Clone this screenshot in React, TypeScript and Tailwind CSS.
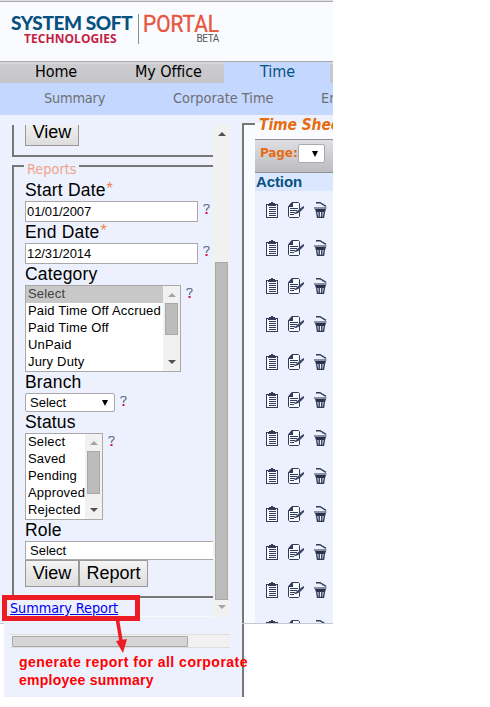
import React from 'react';

const tahoma = 'font-["DejaVu_Sans_Condensed","DejaVu_Sans",sans-serif] [font-stretch:condensed]';
const verdana = 'font-["DejaVu_Sans",sans-serif]';

function Hint() {
  return (
    <svg width="7" height="10" viewBox="0 0 7 10" className="shrink-0">
      <path d="M1 2.6V1.6L2 .6H5L6 1.6V3L3.6 5.2V7" fill="none" stroke="#6d7796" strokeWidth="1.3" />
      <rect x="2.5" y="8" width="2" height="2" fill="#d0103a" />
    </svg>
  );
}

function Arrow({ up = false, color = '#505050' }: { up?: boolean; color?: string }) {
  return (
    <svg width="8" height="4" viewBox="0 0 8 4" className="block shrink-0">
      <path d={up ? 'M0 4L4 0L8 4Z' : 'M0 0L4 4L8 0Z'} fill={color} />
    </svg>
  );
}

function Caret() {
  return (
    <svg width="6" height="6" viewBox="0 0 6 6" className="block shrink-0">
      <path d="M0 0H6L3 6Z" fill="#000" />
    </svg>
  );
}

function Label({ children, required }: { children: React.ReactNode; required?: boolean }) {
  return (
    <div className="flex h-[21px] items-start whitespace-nowrap text-[17.5px] leading-[20px] tracking-[0.18px] text-black">
      {children}
      {required && <span className="ml-px text-[16px] leading-[18px] text-[#e98453]">*</span>}
    </div>
  );
}

function DateInput({ value }: { value: string }) {
  return (
    <div className="flex h-[21px] items-start">
      <div className="h-[21px] w-[173px] border border-[#a9a9a9] bg-white pl-px text-[13px] leading-[19px] tracking-[-0.1px]">{value}</div>
      <div className="ml-[5px] mt-[3px]"><Hint /></div>
    </div>
  );
}

function ListBox({ items, width, thumb, selected }: { items: string[]; width: string; thumb: string; selected?: boolean }) {
  return (
    <div className="flex h-[87px] items-start">
      <div className={`flex h-[87px] border border-[#a9a9a9] bg-white ${width}`}>
        <div className="min-w-0 flex-1 text-[13px] leading-[16px] tracking-[0.18px]">
          {items.map((item, i) => (
            <div key={item} className={`h-[17px] whitespace-nowrap pl-[2px] ${selected && i === 0 ? 'bg-[#c8c8c8] text-[#404040]' : ''}`}>{item}</div>
          ))}
        </div>
        <div className="flex w-[17px] flex-col items-center bg-[#f1f1f1] pt-[7px] pb-[7px]">
          <Arrow up color="#a3a3a3" />
          <div className={`mt-[6px] w-[13px] border border-[#a8a8a8] bg-[#bcbcbc] ${thumb}`} />
          <div className="mt-auto"><Arrow /></div>
        </div>
      </div>
      <div className="ml-[5px] mt-[3px]"><Hint /></div>
    </div>
  );
}

function Button({ children, className = '' }: { children: string; className?: string }) {
  return (
    <div className={`flex h-[27px] justify-center border border-[#999] bg-linear-to-b from-[#f4f4f4] to-[#dddddd] text-[18px] leading-[25px] text-black ${className}`}>
      {children}
    </div>
  );
}

function ActionIcons() {
  return (
    <div className="flex h-[38px] shrink-0 items-start pl-[11px]">
      <svg width="12" height="16" viewBox="0 0 12 16" shapeRendering="crispEdges" className="shrink-0">
        <path d="M.5 2.5H11.5V15.5H.5Z" fill="#f8faff" stroke="#323b58" />
        <path d="M2 4V2H3V1H5V0H7V1H9V2H10V4Z" fill="#323b58" />
        <path d="M3 5.5H10M3 7.5H10M3 9.5H10M3 11.5H10M3 13.5H10" stroke="#323b58" />
      </svg>
      <svg width="16" height="16" viewBox="0 0 16 16" className="ml-[10px] shrink-0">
        <path d="M4 .5H10.5L11.5 1.5V14.5L10.5 15.5H1.5L.5 14.5V4.5Z" fill="#f8faff" stroke="#323b58" />
        <path d="M0 5L4 0H5V5Z" fill="#323b58" />
        <path d="M2 6.5H10M2 8.5H9M2 10.5H7M2 12.5H6" stroke="#323b58" />
        <path d="M6 12L9 9L14 5L16 4V6L12 10L8 12Z" fill="#3b4867" />
      </svg>
      <svg width="13" height="16" viewBox="0 0 13 16" className="ml-[10px] shrink-0">
        <path d="M2 .7H6L12 4.3" fill="none" stroke="#323b58" strokeWidth="1.4" />
        <path d="M0 5H12.5V7H0Z" fill="#8790a6" />
        <path d="M1 7H12L11 10H2Z" fill="#28314c" />
        <path d="M2.5 9L3.5 15.5H9.5L10.5 9M5.2 9V15M7.8 9V15" fill="none" stroke="#323b58" strokeWidth="1.4" />
      </svg>
    </div>
  );
}

function Header() {
  return (
    <header className="w-[333px]">
      <div className="h-[62px] border-b border-[#a9a9a9] bg-[#fafbff]">
        <div className="h-[2px] border-b border-[#aaaaaa] bg-[#dfdfdf]" />
        <div className="flex h-[59px] items-start pl-[11px] pt-[12px]">
          <div className="w-[127px] whitespace-nowrap font-[Lato,sans-serif] font-bold">
            <div className="h-[18px] text-[19px] font-black leading-[17px] tracking-[-0.4px] text-[#07517e]">SYSTEM SOFT</div>
            <div className='ml-[13px] h-[15px] font-["Open_Sans",sans-serif] text-[12px] leading-[13px] tracking-[0.05px] text-[#c41e43]'>TECHNOLOGIES</div>
          </div>
          <div className="h-[30px] w-px bg-[#8c8c8c]" />
          <div className="ml-[4px] w-[77px]">
            <svg width="77" height="18" viewBox="0 0 77 18" className="block">
              <text x="0" y="17.5" textLength="76" lengthAdjust="spacingAndGlyphs" fill="#e75640" stroke="#e75640" strokeWidth=".4" fontFamily="Roboto, sans-serif" fontSize="23">PORTAL</text>
            </svg>
            <div className="pr-px text-right font-[Roboto,sans-serif] text-[10px] leading-[14px] tracking-[-0.4px] text-[#565656]">BETA</div>
          </div>
        </div>
      </div>
      <nav className={`flex h-[21px] text-[16px] leading-[19px] text-black ${tahoma}`}>
        <div className="flex w-[224px] border-t-2 border-[#d8d8dc] bg-linear-to-b from-[#cdcdd1] to-[#c5c5c7]">
          <span className="-mt-[2px] ml-[35px] w-[100px] tracking-[-0.1px]">Home</span>
          <span className="-mt-[2px] whitespace-nowrap tracking-[-0.1px]">My Office</span>
        </div>
        <div className="w-[106px] bg-[#c3d7ff] pl-[36px] text-[#07517e]">Time</div>
        <div className="w-[3px] border-t-2 border-[#d8d8dc] bg-[#c9c9cc]" />
      </nav>
      <div className={`flex h-[32px] overflow-hidden whitespace-nowrap bg-[#c3d7ff] text-[14.4px] leading-[31px] text-[#6f6f72] ${tahoma}`}>
        <span className="h-[27px] w-px bg-[#6095ff]" />
        <span className="ml-[44px] w-[129px] shrink-0 tracking-[-0.2px]">Summary</span>
        <span className="w-[148px] shrink-0">Corporate Time</span>
        <span>Employee</span>
      </div>
    </header>
  );
}

function Sidebar() {
  return (
    <aside className="h-[582px] w-[242px] shrink-0 bg-[#edf1fd] pt-[10px]">
      <div className="flex h-[492px]">
        <div className="w-[213px] overflow-hidden">
          <div className="ml-[12px] h-[32px] w-[230px] border-b-2 border-l-2 border-[#777875] pl-[11px]">
            <div className="flex h-[21px] w-[54px] justify-center border border-t-0 border-[#999] bg-linear-to-b from-[#f0f0f0] to-[#dddddd] text-[18px] leading-[15px]">View</div>
          </div>
          <div className="flex h-[23px] w-[213px] items-center pl-[12px]">
            <span className="h-[15px] w-[12px] self-end border-l-2 border-t-2 border-[#777875]" />
            <span className={`w-[55px] pl-[3px] text-[14.4px] leading-[20px] text-[#f0a388] ${tahoma}`}>Reports</span>
            <span className="mb-[13px] h-[2px] flex-1 self-end bg-[#777875]" />
          </div>
          <div className="ml-[12px] h-[418px] w-[230px] border-b-2 border-l-2 border-[#777875] pl-[11px]">
            <Label required>Start Date</Label>
            <DateInput value="01/01/2007" />
            <Label required>End Date</Label>
            <DateInput value="12/31/2014" />
            <Label>Category</Label>
            <ListBox items={['Select', 'Paid Time Off Accrued', 'Paid Time Off', 'UnPaid', 'Jury Duty']} width="w-[156px]" thumb="h-[32px]" selected />
            <Label>Branch</Label>
            <div className="flex h-[19px]">
              <div className="flex h-[19px] w-[90px] items-center justify-between rounded-[2px] border border-[#a9a9a9] bg-white pl-[4px] pr-[6px] text-[13px] leading-[17px]">Select<Caret /></div>
              <div className="ml-[5px] mt-[3px]"><Hint /></div>
            </div>
            <Label>Status</Label>
            <ListBox items={['Select', 'Saved', 'Pending', 'Approved', 'Rejected']} width="w-[78px]" thumb="h-[43px]" />
            <Label>Role</Label>
            <div className="h-[19px] w-[210px] border border-[#a9a9a9] bg-white pl-[4px] text-[13px] leading-[17px]">Select</div>
            <div className="flex">
              <Button className="w-[54px]">View</Button>
              <Button className="w-[69px]">Report</Button>
            </div>
          </div>
          <div className="flex h-[19px] items-start border-b border-[#f7f8fa] pl-[10px]">
            <a className={`whitespace-nowrap text-[14.3px] leading-[21px] tracking-[-0.05px] text-[#0000ee] underline ${tahoma}`}>Summary Report</a>
          </div>
        </div>
        <div className="flex w-[17px] flex-col items-center bg-[#f1f1f1] pt-[7px]">
          <Arrow up />
          <div className="mt-[126px] h-[338px] w-[13px] border border-[#a8a8a8] bg-[#bcbcbc]" />
          <div className="mt-[5px]"><Arrow color="#a3a3a3" /></div>
        </div>
      </div>
      <div className="flex h-[80px]">
        <div className="h-[80px] w-[4px] shrink-0 pt-[6px]"><div className="h-[74px] border-t border-[#c4c6d0] bg-white" /></div>
        <div className="relative w-[238px] shrink-0 pl-[6px] pt-[17px]">
          <div className="h-[14px] w-[220px] border-y border-[#dedede] bg-[#f1f1f1] pl-[2px] pt-px">
            <div className="h-[11px] w-[176px] rounded-[1px] border border-[#a8a8a8] bg-[#d5d5d5]" />
          </div>
          <p className='relative z-10 mt-[5px] w-[240px] whitespace-nowrap pl-[9px] font-["Liberation_Sans",sans-serif] text-[14px] font-bold leading-[18px] tracking-[0.48px] text-[#f00]'>
            generate report for all corporate<br /><span className="tracking-[0.25px]">employee summary</span>
          </p>
          <div className="absolute -left-[2px] -top-[22px] h-[26px] w-[138px] border-[5px] border-[#ed1c24]" />
          <svg width="16" height="37" viewBox="0 0 16 37" className="absolute left-[110px] top-[2px]">
            <path d="M3.5 1L7.5 25" stroke="#ed1c24" strokeWidth="3.5" />
            <path d="M2 22L13 20L9 34Z" fill="#ed1c24" />
          </svg>
        </div>
      </div>
    </aside>
  );
}

function TimeSheets() {
  return (
    <main className="flex w-[91px] flex-col">
      <div className="flex h-[509px] overflow-hidden border-b border-[#c4c6d0] bg-[#fafbff]">
        <div className="flex w-[13px] shrink-0 flex-col">
          <div className="h-[8px] bg-[#edf1fd]" />
          <div className="flex-1 border-l-2 border-t-2 border-[#777875]" />
        </div>
        <div className="flex w-[78px] shrink-0 flex-col overflow-hidden">
          <div className={`h-[24px] shrink-0 whitespace-nowrap bg-linear-to-b from-[#edf1fd] from-33% to-[#fafbff] to-33% pl-[4px] text-[15.5px] font-bold italic leading-[21px] tracking-[-0.1px] text-[#e56c12] ${tahoma}`}>Time Sheets</div>
          <div className={`flex h-[34px] shrink-0 items-start border-y border-[#929292] bg-linear-to-b from-[#e0e0e4] to-[#bcbcc0] pl-[5px] pt-[4px] text-[12px] font-bold leading-[18px] text-[#e56c12] ${verdana}`}>
            <span className="w-[38px] tracking-[-0.1px]">Page:</span>
            <span className="flex h-[19px] w-[27px] items-center justify-end rounded-[2px] border border-[#a9a9a9] bg-white pr-[6px]"><Caret /></span>
          </div>
          <div className="h-[18px] shrink-0 bg-[#dbe6ff] pl-px text-[15px] font-bold leading-[18px] tracking-[-0.1px] text-[#07517e]">Action</div>
          <div className="flex flex-1 flex-col overflow-hidden bg-[#edf1fd] pt-[11px]">
            {Array.from({ length: 12 }, (_, i) => <ActionIcons key={i} />)}
          </div>
        </div>
      </div>
      <div className="flex h-[73px]">
        <div className="w-[2px] bg-[#777875]" />
        <div className="w-[3px] bg-[#fafbff]" />
      </div>
    </main>
  );
}

export default function App() {
  return (
    <div className='h-[707px] w-[490px] overflow-hidden bg-white font-["Liberation_Sans",Arial,sans-serif] text-black'>
      <Header />
      <div className="flex h-[582px] w-[333px]">
        <Sidebar />
        <TimeSheets />
      </div>
    </div>
  );
}
